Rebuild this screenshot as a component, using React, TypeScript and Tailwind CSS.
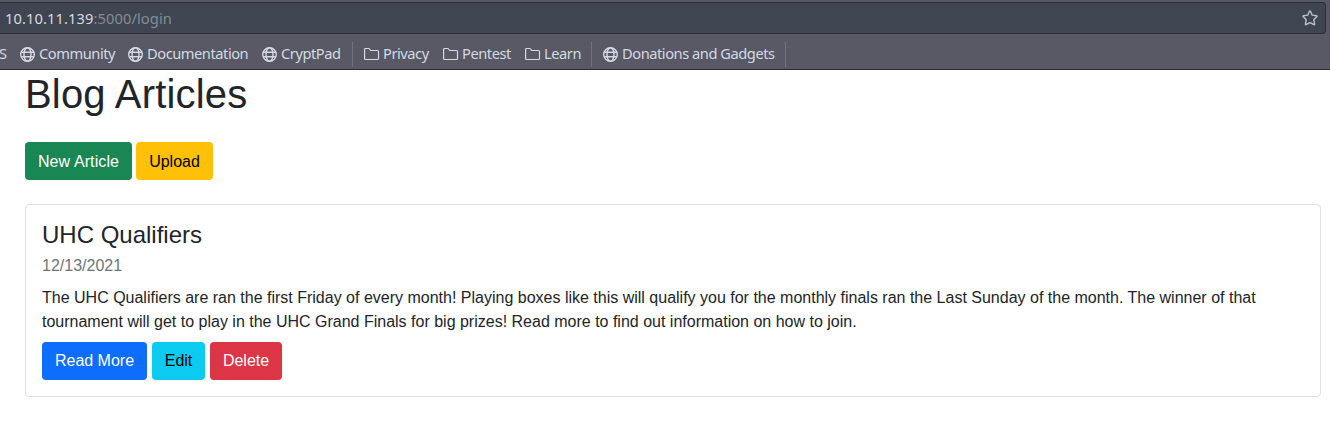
import React from "react";

function Globe() {
  return (
    <svg width="16" height="16" viewBox="0 0 16 16" fill="none" stroke="currentColor" strokeWidth="1.4" className="shrink-0">
      <circle cx="7.5" cy="8.5" r="6.8" />
      <ellipse cx="7.5" cy="8.5" rx="3.5" ry="6.8" />
      <path d="M1.2 6.2h12.6M1.2 10.8h12.6" />
    </svg>
  );
}

function Folder() {
  return (
    <svg width="16" height="16" viewBox="0 0 16 16" fill="none" stroke="currentColor" strokeWidth="1.2" strokeLinejoin="round" className="shrink-0">
      <path d="M.6 3.5Q.6 2.5 1.6 2.5H4.6Q5.2 2.5 5.6 3L6.7 4.5H13.4Q14.5 4.5 14.5 5.6V12.4Q14.5 13.5 13.4 13.5H1.7Q.6 13.5 .6 12.4Z" />
    </svg>
  );
}

function Bookmark({ label, width, folder = false }: { label: string; width: string; folder?: boolean }) {
  return (
    <a className={`flex h-full shrink-0 items-center gap-[3px] whitespace-nowrap ${width}`}>
      {folder ? <Folder /> : <Globe />}
      <span className="pb-[3px]">{label}</span>
    </a>
  );
}

function Separator() {
  return <div className="mr-[11px] h-[25px] w-px shrink-0 bg-[#72737e]" />;
}

function Button({ label, color }: { label: string; color: string }) {
  return <button className={`h-[38px] shrink-0 rounded text-center text-base leading-6 ${color}`}>{label}</button>;
}

export default function App() {
  return (
    <div className="h-[425px] w-full overflow-hidden bg-white font-['Liberation_Sans',sans-serif] text-[#212529]">
      <header className="h-[70px] border-b border-[#2b2c38] bg-[#585965] pt-[2px] font-['Noto_Sans',sans-serif] text-[14.67px] text-[#d3dae3]">
        <div className="mr-1 flex h-8 items-center justify-between rounded-r border-y border-r border-[#2b2e39] bg-[#404651] pr-[7px] pl-[5px]">
          <span className="pb-px text-[14.67px] leading-5 tracking-[0.1px]">
            10.10.11.139<span className="text-[#868b94]">:5000/login</span>
          </span>
          <svg width="16" height="16" viewBox="0 0 16 16" fill="none" stroke="#b9c0ca" strokeWidth="1.4" strokeLinejoin="round">
            <path d="M8 .9Q8.3.9 8.5 1.3L10.2 5.1 14.7 5.8Q15.4 6 14.9 6.6L11.8 9.8 12.6 14.2Q12.6 15 11.9 14.7L8 12.6 4.1 14.7Q3.4 15 3.4 14.2L4.2 9.8 1.1 6.6Q.6 6 1.3 5.8L5.8 5.1 7.5 1.3Q7.7.9 8 .9Z" />
          </svg>
        </div>
        <nav className="flex h-[35px] items-center pt-[5px] tracking-[-0.46px]">
          <span className="w-[20px] shrink-0 -indent-[1px] pb-[3px]">S</span>
          <Bookmark label="Community" width="w-[108px]" />
          <Bookmark label="Documentation" width="w-[134px]" />
          <Bookmark label="CryptPad" width="w-[90px]" />
          <Separator />
          <Bookmark label="Privacy" width="w-[79px]" folder />
          <Bookmark label="Pentest" width="w-[82px]" folder />
          <Bookmark label="Learn" width="w-[66px]" folder />
          <Separator />
          <Bookmark label="Donations and Gadgets" width="w-[182px]" />
          <Separator />
        </nav>
      </header>
      <main className="pr-[9px] pl-[25px]">
        <h1 className="text-[40px] leading-[48px] tracking-[0.17px]">Blog Articles</h1>
        <div className="mt-6 flex gap-1">
          <Button label="New Article" color="w-[107px] pt-[2px] tracking-[0.1px] bg-[#198754] text-white" />
          <Button label="Upload" color="w-[77px] pt-[2px] bg-[#ffc107] text-black" />
        </div>
        <article className="mt-6 h-[193px] rounded border border-[#dfdfdf] p-4">
          <h4 className="text-2xl leading-[27px]">UHC Qualifiers</h4>
          <div className="mt-2 text-base leading-5 text-[#6c757d]">12/13/2021</div>
          <p className="mt-[10px] text-base leading-6">
            The UHC Qualifiers are ran the first Friday of every month! Playing boxes like this will qualify you for the monthly finals ran the Last Sunday of the month. The winner of that tournament will get to play in the UHC Grand Finals for big prizes! Read more to find out information on how to join.
          </p>
          <div className="mt-2 flex gap-[5px]">
            <Button label="Read More" color="w-[105px] bg-[#0d6efd] text-white" />
            <Button label="Edit" color="w-[53px] bg-[#0dcaf0] text-black" />
            <Button label="Delete" color="w-[72px] bg-[#dc3545] text-white" />
          </div>
        </article>
      </main>
    </div>
  );
}
